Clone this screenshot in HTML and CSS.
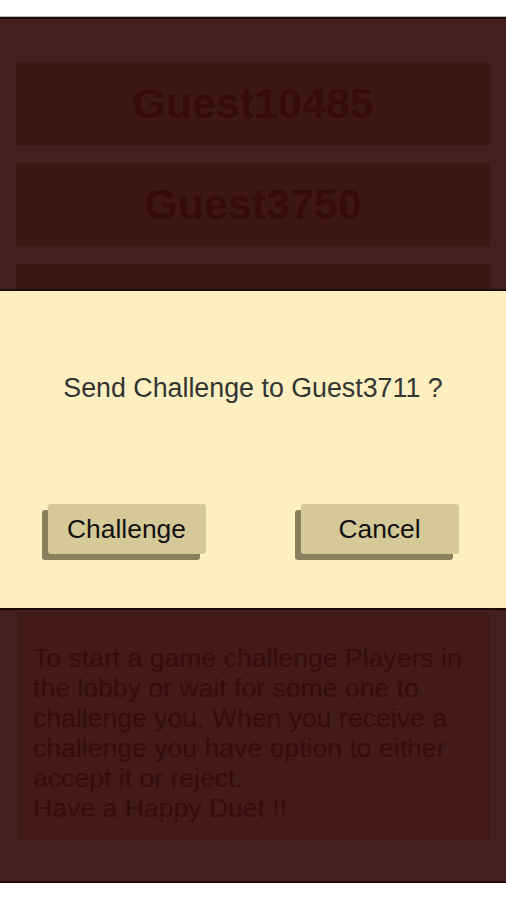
FILE: index.html
```html
<!DOCTYPE html>
<html lang="en">
<head>
  <meta charset="UTF-8" />
  <meta name="viewport" content="width=device-width, initial-scale=1.0"/>
  <title>Duet Lobby</title>
  <link rel="stylesheet" href="styles.css">
</head>
<body>
  <div class="lobby">
    <div class="players">
      <div class="player">Guest10485</div>
      <div class="player">Guest3750</div>
      <div class="player">Guest3711</div>
      <div class="player">Guest8821</div>
      <div class="player">Guest5140</div>
    </div>

    <div class="help">
      To start a game challenge Players in the lobby or wait for some one to challenge you. When you receive a challenge you have option to either accept it or reject.<br>
      Have a Happy Duet !!
    </div>
  </div>

  <div class="dialog">
    <p class="dialog-text">Send Challenge to Guest3711 ?</p>
    <div class="dialog-buttons">
      <button class="btn">Challenge</button>
      <button class="btn">Cancel</button>
    </div>
  </div>
</body>
</html>
```

FILE: styles.css
```css
body {
  font-family: 'Liberation Sans', Arial, sans-serif;
  background: #fff;
  margin: 0;
  padding: 0;
}
.lobby {
  margin-top: 17px;
  height: 866px;
  box-sizing: border-box;
  background: #441f1f;
  border-top: 2px solid #1c0b0b;
  border-bottom: 2px solid #1c0b0b;
  box-shadow: 0 -1px 0 #b8b8b8, 0 1px 0 #c8c8c8;
  padding: 43px 16px 0;
}
.players {
  height: 535px;
  overflow: hidden;
  display: flex;
  flex-direction: column;
  gap: 18px;
}
.player {
  flex: 0 0 83px;
  display: flex;
  align-items: center;
  justify-content: center;
  background: #3c1714;
  color: #350b0b;
  font-size: 43px;
  font-weight: bold;
}
.help {
  margin: 16px 0 0 2px;
  padding: 30px 15px 17px 15px;
  background: #421a1a;
  color: #350d0d;
  font-size: 26.6px;
  line-height: 30px;
}
.dialog {
  position: absolute;
  left: 0;
  right: 0;
  top: 289px;
  height: 321px;
  box-sizing: border-box;
  background: #fdefc0;
  border-top: 2px solid #1b0a0a;
  border-bottom: 2px solid #1b0a0a;
}
.dialog-text {
  margin: 82px 0 0;
  text-align: center;
  color: #333;
  font-size: 26.8px;
  line-height: 30px;
}
.dialog-buttons {
  margin-top: 101px;
  display: grid;
  grid-template-columns: 1fr 1fr;
  justify-items: center;
}
.btn {
  width: 158px;
  height: 50px;
  background: #d4c997;
  color: #111;
  border: none;
  border-radius: 3px;
  box-shadow: -6px 6px 0 #8a805d;
  font-family: inherit;
  font-size: 26.4px;
  cursor: pointer;
}
```
